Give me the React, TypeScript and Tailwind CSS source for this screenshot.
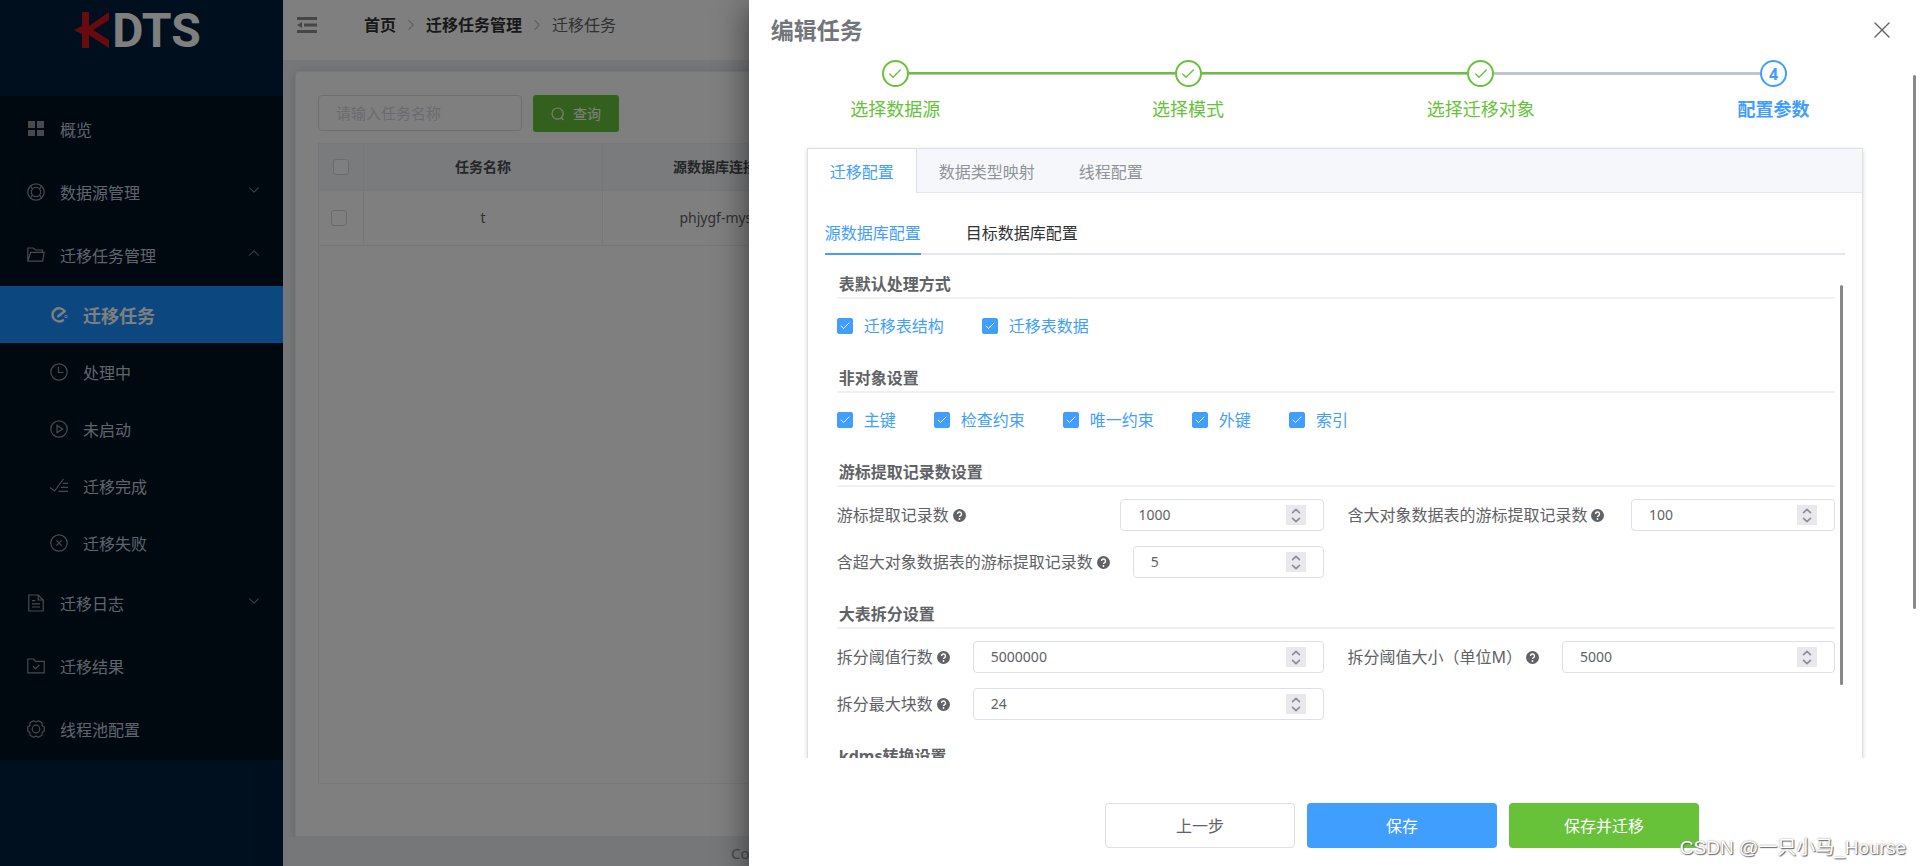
import { useState, type ReactNode } from "react";
import clsx from "clsx";
import { Check, ChevronDown, ChevronRight, ChevronUp, X } from "lucide-react";

type IconName =
  | "grid"
  | "help"
  | "folder"
  | "loading"
  | "clock"
  | "play"
  | "finished"
  | "failed"
  | "document"
  | "folderChecked"
  | "setting";

const iconPaths: Record<IconName, ReactNode> = {
  grid: (
    <g fill="currentColor" stroke="none">
      <rect x="1" y="1" width="7" height="7" />
      <rect x="10" y="1" width="7" height="7" />
      <rect x="1" y="10" width="7" height="6" />
      <rect x="10" y="10" width="7" height="6" />
    </g>
  ),
  help: (
    <>
      <circle cx="9" cy="9" r="8.2" />
      <circle cx="9" cy="9" r="4.6" />
      <path d="M5.5 5.8 3.4 3.2M12.5 5.8l2.1-2.6M5.5 12.2l-2.1 2.6M12.5 12.2l2.1 2.6" />
    </>
  ),
  folder: (
    <path d="M.8 15.2V2h5.6l2 2h7v2.4M.8 15.2 3.6 6.4h13.6l-1.6 8.8H.8Z" />
  ),
  loading: (
    <g strokeWidth="2.4" strokeLinecap="round">
      <path d="M14.6 5.2A6.6 6.6 0 1 0 13 14.2" />
      <path d="m8.2 10.2 6.4-5" />
      <circle cx="16" cy="10.4" r=".4" />
    </g>
  ),
  clock: (
    <>
      <circle cx="9" cy="9" r="8.2" />
      <path d="M8.5 4v5.5h5" />
    </>
  ),
  play: (
    <>
      <circle cx="9" cy="9" r="8.2" />
      <path d="M7 5.4v7.2L12.6 9 7 5.4Z" />
    </>
  ),
  finished: (
    <path d="m0 10.6 4.6 3.4 8.8-12M13 6.4h5M11 10.4h7M8.6 14.4H18" />
  ),
  failed: (
    <>
      <circle cx="9" cy="9" r="8.2" />
      <path d="m6.4 6.4 5.2 5.2m0-5.2-5.2 5.2" />
    </>
  ),
  document: (
    <path d="M1.8 1h9.4l5 5v11H1.8V1ZM11.2 1v5h5M5 6.6h3.4M5 9.8h8M5 13h8" />
  ),
  folderChecked: (
    <path d="M.8 2h5.8l2 2.4h8.6v11.4H.8V2ZM6 9.2l2.6 2.4L12.4 8" />
  ),
  setting: (
    <>
      <path
        strokeLinejoin="round"
        d="M17.3 6.9v4.2l-2.2 1.4-.1 2.7-3.6 2.1L9 16l-2.4 1.3L3 15.2l-.1-2.7-2.2-1.4V6.9l2.2-1.4.1-2.7L6.6.7 9 2l2.4-1.3L15 2.8l.1 2.7 2.2 1.4Z"
      />
      <circle cx="9" cy="9" r="3.8" />
    </>
  ),
};

function MenuIcon({ name }: { name: IconName }) {
  return (
    <svg
      viewBox="0 0 18 18"
      className="size-[18px] shrink-0"
      fill="none"
      stroke="currentColor"
      strokeWidth="1.2"
    >
      {iconPaths[name]}
    </svg>
  );
}

interface MenuEntry {
  label: string;
  icon: IconName;
  arrow?: "up" | "down";
  children?: { label: string; icon: IconName }[];
}

const menu: MenuEntry[] = [
  { label: "概览", icon: "grid" },
  { label: "数据源管理", icon: "help", arrow: "down" },
  {
    label: "迁移任务管理",
    icon: "folder",
    arrow: "up",
    children: [
      { label: "迁移任务", icon: "loading" },
      { label: "处理中", icon: "clock" },
      { label: "未启动", icon: "play" },
      { label: "迁移完成", icon: "finished" },
      { label: "迁移失败", icon: "failed" },
    ],
  },
  { label: "迁移日志", icon: "document", arrow: "down" },
  { label: "迁移结果", icon: "folderChecked" },
  { label: "线程池配置", icon: "setting" },
];

function Logo() {
  return (
    <div className="flex h-24 items-start justify-center gap-0.5 pr-2 pt-[11px]">
      <svg viewBox="0 0 36 40" className="h-10 w-9 fill-[#d2151e]">
        <path d="M8 1h7v14L35 1v8L19 19l16 10v8L15 24v13H8V23l-8-4 8-4V1Z" />
      </svg>
      <span className="font-['Roboto',sans-serif] text-5xl leading-10 font-bold text-white">
        DTS
      </span>
    </div>
  );
}

function Sidebar() {
  const activeItem = "迁移任务";

  return (
    <aside className="w-[283px] shrink-0 bg-[#001f3d]">
      <Logo />
      <nav className="bg-[#001020] pt-px text-base text-[#bfcbd9]">
        {menu.map((item) => (
          <div key={item.label}>
            <a href="#" className="flex h-[63px] items-center pr-5 pl-[27px]">
              <span className="text-[#909399]">
                <MenuIcon name={item.icon} />
              </span>
              <span className="flex-1 pt-[3px] pl-[15px]">{item.label}</span>
              {item.arrow === "down" && (
                <ChevronDown className="mb-1 size-[18px] text-[#909399]" strokeWidth={1.4} />
              )}
              {item.arrow === "up" && (
                <ChevronUp className="mb-1 size-[18px] text-[#909399]" strokeWidth={1.4} />
              )}
            </a>
            {item.children?.map((child) => {
              const active = child.label === activeItem;
              return (
                <a
                  key={child.label}
                  href="#"
                  className={clsx(
                    "flex h-[57px] items-center pl-[50px]",
                    active && "bg-[#1890ff] text-lg font-bold text-white",
                  )}
                >
                  <span className={active ? "text-white" : "text-[#909399]"}>
                    <MenuIcon name={child.icon} />
                  </span>
                  <span className="pt-[3px] pl-[15px]">{child.label}</span>
                </a>
              );
            })}
          </div>
        ))}
      </nav>
    </aside>
  );
}

function TopBar() {
  return (
    <header className="flex h-[60px] shrink-0 items-start bg-white pt-[13px] pl-3.5">
      <button type="button" aria-label="折叠菜单" className="mt-1">
        <svg viewBox="0 0 20 16" className="h-4 w-5 fill-[#8c8c8c]">
          <path d="M0 0h20v3H0zM7 6.5h13v3H7zM0 13h20v3H0zM5 5v6L0 8z" />
        </svg>
      </button>
      <nav className="flex items-center gap-1.5 pl-[47px] text-base leading-6 text-[#606266]">
        <a href="#" className="font-bold text-[#303133]">
          首页
        </a>
        <ChevronRight className="size-[18px] text-[#c0c4cc]" strokeWidth={1.5} />
        <a href="#" className="font-bold text-[#303133]">
          迁移任务管理
        </a>
        <ChevronRight className="size-[18px] text-[#c0c4cc]" strokeWidth={1.5} />
        <span>迁移任务</span>
      </nav>
    </header>
  );
}

function TaskList() {
  const cell = "border-r border-b border-[#ebeef5]";
  const box =
    "block size-4 appearance-none rounded-[3px] border border-[#d4d7de] bg-white";

  return (
    <main className="flex min-w-0 flex-1 flex-col bg-[#eaeef2]">
      <TopBar />
      <div className="flex min-h-0 flex-1 overflow-hidden px-3 pt-[11px]">
        <section className="flex flex-1 flex-col rounded-t border border-[#ebeef5] bg-white px-[22px] pt-[23px] pb-[52px] shadow-[0_2px_12px_rgba(0,0,0,0.15)]">
          <form className="flex gap-[11px]">
            <input
              type="text"
              aria-label="任务名称"
              placeholder="请输入任务名称"
              className="h-9 w-51 rounded border border-[#dcdfe6] px-[17px] text-[15px] placeholder:text-[#d4d7de]"
            />
            <button
              type="button"
              className="flex h-[37px] w-[86px] items-center justify-center gap-2 rounded-[3px] bg-[#67c23a] text-sm text-white"
            >
              <svg
                viewBox="0 0 14 14"
                className="size-3.5"
                fill="none"
                stroke="currentColor"
                strokeWidth="1.2"
              >
                <circle cx="6.6" cy="6.6" r="5.6" />
                <path d="m10 10.4 2.4 2.6" />
              </svg>
              查询
            </button>
          </form>
          <div className="mt-[11px] flex-1 border border-[#ebeef5]">
            <table className="w-full table-fixed border-separate border-spacing-0 text-center text-sm text-[#606266]">
              <colgroup>
                <col className="w-[45px]" />
                <col className="w-[239px]" />
                <col className="w-[239px]" />
                <col />
              </colgroup>
              <thead>
                <tr className="h-[47px] bg-[#f5f7fa] text-[#4a4c50]">
                  <th className={cell}>
                    <input type="checkbox" aria-label="全选" className={clsx(box, "ml-3.5")} />
                  </th>
                  <th className={cell}>任务名称</th>
                  <th className={cell}>源数据库连接名</th>
                  <th className={cell} />
                </tr>
              </thead>
              <tbody>
                <tr className="h-[55px]">
                  <td className={cell}>
                    <input type="checkbox" aria-label="选择 t" className={clsx(box, "ml-3")} />
                  </td>
                  <td className={cell}>t</td>
                  <td className={cell}>phjygf-mysql</td>
                  <td className={cell} />
                </tr>
              </tbody>
            </table>
          </div>
        </section>
      </div>
      <footer className="h-[29px] shrink-0 pl-[448px] text-[15px] leading-8 text-[#909399]">
        Copyright
      </footer>
    </main>
  );
}

const steps = ["选择数据源", "选择模式", "选择迁移对象", "配置参数"];

function StepLine({ done, hidden }: { done: boolean; hidden: boolean }) {
  return (
    <span
      className={clsx(
        "h-[3px] flex-1 bg-[#c0c4cc]",
        done && "border-t-2 border-[#67c23a]",
        hidden && "invisible",
      )}
    />
  );
}

function Steps() {
  const current = 3;

  return (
    <ol className="grid grid-cols-4">
      {steps.map((label, index) => {
        const done = index < current;
        return (
          <li
            key={label}
            className={clsx(
              "text-center text-lg leading-6",
              done ? "text-[#67c23a]" : "font-bold text-[#409eff]",
            )}
          >
            <div className="flex items-center">
              <StepLine done={done} hidden={index === 0} />
              <span className="flex size-[27px] items-center justify-center rounded-full border-2 border-current text-base">
                {done ? <Check className="size-4" strokeWidth={2} /> : index + 1}
              </span>
              <StepLine done={index + 1 < current} hidden={index === steps.length - 1} />
            </div>
            <div className="pt-2.5">{label}</div>
          </li>
        );
      })}
    </ol>
  );
}

function SectionTitle({ children }: { children: ReactNode }) {
  return (
    <h3 className="border-b-2 border-[#f0f0f0] pt-px pb-px pl-0.5 text-base leading-6 font-bold text-[#606266]">
      {children}
    </h3>
  );
}

function CheckOption({ label }: { label: string }) {
  return (
    <label className="flex items-center gap-[11px] text-base leading-6 text-[#409eff]">
      <span className="relative">
        <input
          type="checkbox"
          defaultChecked
          className="peer block size-4 appearance-none rounded-xs border border-[#dcdfe6] checked:border-[#409eff] checked:bg-[#409eff]"
        />
        <Check
          className="pointer-events-none absolute inset-0.5 hidden size-3 text-white peer-checked:block"
          strokeWidth={2}
        />
      </span>
      {label}
    </label>
  );
}

function CheckSection({ title, options }: { title: string; options: string[] }) {
  return (
    <section className="pb-[27px]">
      <SectionTitle>{title}</SectionTitle>
      <div className="flex gap-[38px] pt-[15px]">
        {options.map((option) => (
          <CheckOption key={option} label={option} />
        ))}
      </div>
    </section>
  );
}

function QuestionIcon() {
  return (
    <svg viewBox="0 0 13 13" className="ml-1 size-[13px] shrink-0">
      <circle cx="6.5" cy="6.5" r="6.5" fill="#606266" />
      <path
        d="M4.5 5a2 2 0 1 1 2.8 1.8c-.6.3-.8.6-.8 1.2"
        fill="none"
        stroke="#fff"
        strokeWidth="1.4"
      />
      <circle cx="6.5" cy="10" r=".9" fill="#fff" />
    </svg>
  );
}

interface NumberFieldProps {
  id: string;
  label: string;
  initial: number;
  compact?: boolean;
}

function NumberField({ id, label, initial, compact }: NumberFieldProps) {
  const [value, setValue] = useState(String(initial));

  const step = (delta: number) => setValue(String(Number(value) + delta));

  return (
    <div className="flex items-center justify-between gap-[23px]">
      <label
        htmlFor={id}
        className="flex shrink-0 items-center text-base leading-6 text-[#606266]"
      >
        {label}
        <QuestionIcon />
      </label>
      <div
        className={clsx(
          "flex h-8 items-center rounded border border-[#dcdfe6] px-[17px]",
          compact ? "w-51" : "min-w-0 flex-1",
        )}
      >
        <input
          id={id}
          type="text"
          inputMode="numeric"
          value={value}
          onChange={(e) => setValue(e.target.value)}
          className="w-full min-w-0 text-sm text-[#606266] outline-none"
        />
        <div className="flex h-5 w-5 shrink-0 flex-col items-center justify-center gap-px bg-[#e8e8ed] text-[#8f8f99]">
          <button type="button" aria-label="增加" onClick={() => step(1)}>
            <ChevronUp className="h-2 w-3" viewBox="3 5 18 14" strokeWidth={3} />
          </button>
          <button type="button" aria-label="减少" onClick={() => step(-1)}>
            <ChevronDown className="h-2 w-3" viewBox="3 5 18 14" strokeWidth={3} />
          </button>
        </div>
      </div>
    </div>
  );
}

function NumberSection({ title, fields }: { title: string; fields: NumberFieldProps[] }) {
  return (
    <section className="pb-[23px]">
      <SectionTitle>{title}</SectionTitle>
      <div className="grid grid-cols-2 gap-x-[23px] gap-y-[15px] pt-3">
        {fields.map((field) => (
          <NumberField key={field.id} {...field} />
        ))}
      </div>
    </section>
  );
}

function ConfigCard() {
  const [tab, setTab] = useState("迁移配置");
  const [source, setSource] = useState("源数据库配置");

  return (
    <div className="mr-[57px] ml-[58px] mt-[27px] h-[700px] border border-[#dcdfe6] bg-white shadow-[0_2px_4px_rgba(0,0,0,0.12),0_0_6px_rgba(0,0,0,0.04)]">
      <div className="flex h-11 border-b border-[#e4e7ed] bg-[#f5f7fa] text-base">
        {["迁移配置", "数据类型映射", "线程配置"].map((name) => (
          <button
            key={name}
            type="button"
            onClick={() => setTab(name)}
            className={clsx(
              "px-[22px] pt-0.5",
              name === tab
                ? "-mb-px border-r border-[#dcdfe6] bg-white text-[#409eff]"
                : "text-[#909399]",
            )}
          >
            {name}
          </button>
        ))}
      </div>
      <div className="px-[17px] pt-[22px]">
        <div className="flex gap-[45px] border-b-2 border-[#e4e7ed] text-base leading-6">
          {["源数据库配置", "目标数据库配置"].map((name) => (
            <button
              key={name}
              type="button"
              onClick={() => setSource(name)}
              className={clsx(
                "-mb-0.5 border-b-2 pt-1.5 pb-2",
                name === source
                  ? "border-[#409eff] text-[#409eff]"
                  : "border-transparent text-[#303133]",
              )}
            >
              {name}
            </button>
          ))}
        </div>
        <div className="relative pt-4 pr-2.5 pl-3">
          <span className="absolute top-[30px] right-0.5 h-[400px] w-[3px] rounded-full bg-[#888888]" />
          <CheckSection title="表默认处理方式" options={["迁移表结构", "迁移表数据"]} />
          <CheckSection
            title="非对象设置"
            options={["主键", "检查约束", "唯一约束", "外键", "索引"]}
          />
          <NumberSection
            title="游标提取记录数设置"
            fields={[
              { id: "fetch-size", label: "游标提取记录数", initial: 1000, compact: true },
              {
                id: "lob-fetch-size",
                label: "含大对象数据表的游标提取记录数",
                initial: 100,
                compact: true,
              },
              {
                id: "big-lob-fetch-size",
                label: "含超大对象数据表的游标提取记录数",
                initial: 5,
              },
            ]}
          />
          <NumberSection
            title="大表拆分设置"
            fields={[
              { id: "split-rows", label: "拆分阈值行数", initial: 5000000 },
              { id: "split-size", label: "拆分阈值大小（单位M）", initial: 5000 },
              { id: "split-blocks", label: "拆分最大块数", initial: 24 },
            ]}
          />
          <SectionTitle>kdms转换设置</SectionTitle>
        </div>
      </div>
    </div>
  );
}

function EditDrawer() {
  const button = "h-[45px] w-[190px] rounded text-base";

  return (
    <div
      role="dialog"
      aria-label="编辑任务"
      className="relative flex w-[61%] flex-col bg-white shadow-[0_8px_10px_-5px_rgba(0,0,0,0.2),0_16px_24px_2px_rgba(0,0,0,0.14),0_6px_30px_5px_rgba(0,0,0,0.3)]"
    >
      <div className="flex h-[60px] shrink-0 items-center justify-between pr-6 pl-[22px]">
        <h2 className="text-[23px] font-bold text-[#72767b]">编辑任务</h2>
        <button type="button" aria-label="关闭" className="text-[#606266]">
          <X className="size-7" strokeWidth={1.2} />
        </button>
      </div>
      <div className="min-h-0 flex-1 overflow-hidden">
        <Steps />
        <ConfigCard />
      </div>
      <span className="absolute top-[75px] right-1 h-[534px] w-[3px] rounded-full bg-[#888888]" />
      <div className="flex h-[108px] shrink-0 items-center justify-end gap-3 pt-9 pr-[221px] pb-[9px]">
        <button
          type="button"
          className={clsx(button, "border border-[#dcdfe6] text-[#606266]")}
        >
          上一步
        </button>
        <button type="button" className={clsx(button, "bg-[#409eff] text-white")}>
          保存
        </button>
        <button type="button" className={clsx(button, "bg-[#67c23a] text-white")}>
          保存并迁移
        </button>
      </div>
    </div>
  );
}

export default function App() {
  return (
    <div className="relative flex h-screen overflow-hidden font-['Noto_Sans','Noto_Sans_CJK_SC',sans-serif]">
      <Sidebar />
      <TaskList />
      <div className="absolute inset-0 flex justify-end bg-black/50">
        <EditDrawer />
      </div>
      <p className="absolute right-3.5 bottom-1.5 font-['Liberation_Sans','Noto_Sans_CJK_SC',sans-serif] text-[19px] leading-6 text-white [text-shadow:1px_1px_1px_#666,0_0_2px_#888]">
        CSDN @一只小马_Hourse
      </p>
    </div>
  );
}
